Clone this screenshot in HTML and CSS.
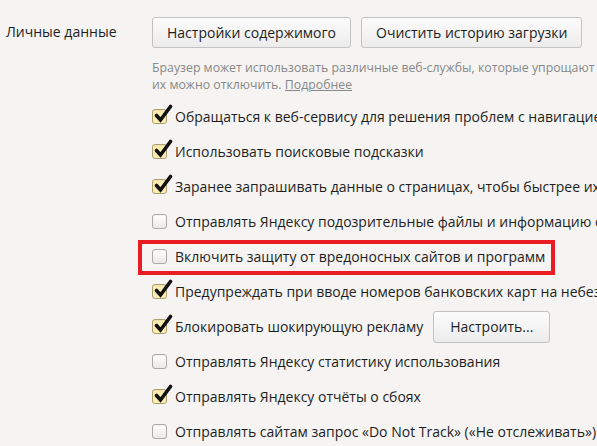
FILE: index.html
```html
<!DOCTYPE html>
<html lang="ru">
<head>
  <meta charset="UTF-8" />
  <title>Личные данные</title>
  <link rel="stylesheet" href="styles.css">
</head>
<body>
  <div class="section">
    <div class="section-label">Личные данные</div>

    <div class="section-body">
      <div class="btn-row">
        <button class="btn">Настройки содержимого</button>
        <button class="btn">Очистить историю загрузки</button>
      </div>

      <p class="hint">
        Браузер может использовать различные веб-службы, которые упрощают работу в интернете.<br>
        их можно отключить. <a href="#">Подробнее</a>
      </p>

      <ul class="options">
        <li class="option">
          <span class="box on"><svg class="tick" viewBox="0 0 20 20"><path d="M3.5 11.5 L7.5 16 L17.5 2.5" /></svg></span>
          Обращаться к веб-сервису для решения проблем с навигацией
        </li>
        <li class="option">
          <span class="box on"><svg class="tick" viewBox="0 0 20 20"><path d="M3.5 11.5 L7.5 16 L17.5 2.5" /></svg></span>
          Использовать поисковые подсказки
        </li>
        <li class="option">
          <span class="box on"><svg class="tick" viewBox="0 0 20 20"><path d="M3.5 11.5 L7.5 16 L17.5 2.5" /></svg></span>
          Заранее запрашивать данные о страницах, чтобы быстрее их загружать
        </li>
        <li class="option">
          <span class="box"></span>
          Отправлять Яндексу подозрительные файлы и информацию о них
        </li>
        <li class="option marked">
          <span class="box"></span>
          Включить защиту от вредоносных сайтов и программ
        </li>
        <li class="option">
          <span class="box on"><svg class="tick" viewBox="0 0 20 20"><path d="M3.5 11.5 L7.5 16 L17.5 2.5" /></svg></span>
          Предупреждать при вводе номеров банковских карт на небезопасных сайтах
        </li>
        <li class="option">
          <span class="box on"><svg class="tick" viewBox="0 0 20 20"><path d="M3.5 11.5 L7.5 16 L17.5 2.5" /></svg></span>
          Блокировать шокирующую рекламу
          <button class="btn btn-small">Настроить...</button>
        </li>
        <li class="option">
          <span class="box"></span>
          Отправлять Яндексу статистику использования
        </li>
        <li class="option">
          <span class="box on"><svg class="tick" viewBox="0 0 20 20"><path d="M3.5 11.5 L7.5 16 L17.5 2.5" /></svg></span>
          Отправлять Яндексу отчёты о сбоях
        </li>
        <li class="option">
          <span class="box"></span>
          Отправлять сайтам запрос «Do Not Track» («Не отслеживать»)
        </li>
      </ul>
    </div>
  </div>
</body>
</html>
```

FILE: styles.css
```css
html { overflow: hidden; }
body {
  margin: 0;
  background: #f5f4f2;
  color: #1e1e1e;
  font-family: "Open Sans", "Noto Sans", sans-serif;
  font-size: 14px;
}
.section {
  display: grid;
  grid-template-columns: 152px 1fr;
  padding-top: 17px;
  white-space: nowrap;
}
.section-label {
  padding-left: 6px;
  line-height: 30px;
}
.btn-row { display: flex; gap: 10px; }
.btn {
  height: 31px;
  padding: 0 14px;
  font: inherit;
  color: #1e1e1e;
  background: linear-gradient(#fcfcfc, #ececec);
  border: 1px solid #c2c2c2;
  border-radius: 3px;
}
.btn-small { height: 32px; margin-left: 10px; padding: 0 16px; }
.hint {
  margin: 11px 0 0;
  font-size: 12.3px;
  line-height: 17px;
  color: #888;
}
.hint a { color: #888; }
.options { list-style: none; margin: 6px 0 0; padding: 0; }
.option {
  display: flex;
  align-items: center;
  height: 35px;
}
.box {
  position: relative;
  flex: none;
  box-sizing: border-box;
  width: 15px;
  height: 15px;
  margin-right: 8px;
  border: 1px solid #aaa;
  border-radius: 3px;
  background: linear-gradient(#ffffff, #e9e9e9);
  box-shadow: inset 0 1px 1px rgba(0,0,0,0.06);
}
.box.on {
  border-color: #ad9f70;
  background: #fbedb2;
}
.tick {
  position: absolute;
  left: 0;
  top: -6px;
  width: 20px;
  height: 20px;
  fill: none;
  stroke: #111;
  stroke-width: 3.6;
  stroke-linecap: round;
  stroke-linejoin: miter;
}
.marked { position: relative; width: fit-content; }
.marked::after {
  content: "";
  position: absolute;
  left: -14px;
  right: -10px;
  top: 1px;
  bottom: -1px;
  border: 4px solid #e91c24;
}
```
